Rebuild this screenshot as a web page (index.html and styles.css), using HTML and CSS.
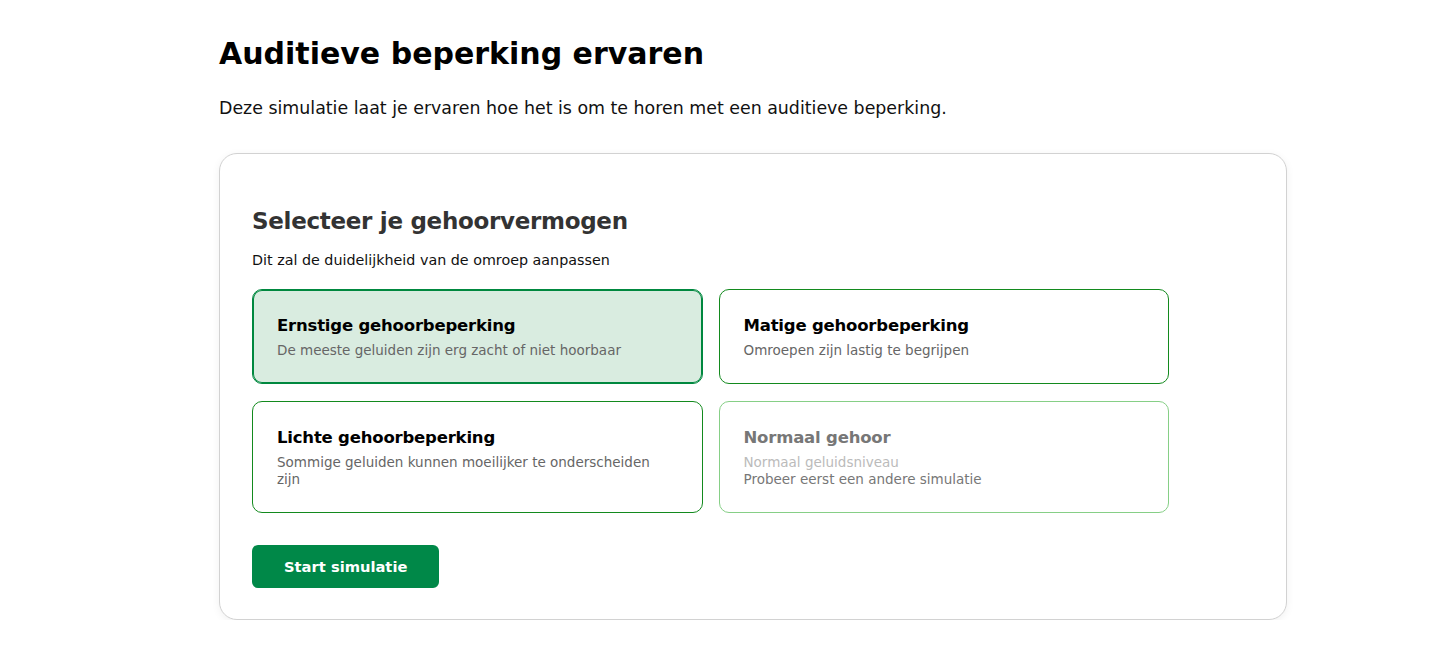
FILE: index.html
```html
<!DOCTYPE html>
<html lang="nl">
<head>
<meta charset="utf-8">
<title>Auditieve beperking ervaren</title>
<link rel="stylesheet" href="styles.css">
</head>
<body>
<main class="page">
  <h1 class="page-title">Auditieve beperking ervaren</h1>
  <p class="page-intro">Deze simulatie laat je ervaren hoe het is om te horen met een auditieve beperking.</p>
  <section class="card">
    <h2 class="card-title">Selecteer je gehoorvermogen</h2>
    <p class="card-sub">Dit zal de duidelijkheid van de omroep aanpassen</p>
    <div class="options">
      <button class="option option--selected" type="button">
        <span class="option-title">Ernstige gehoorbeperking</span>
        <span class="option-desc">De meeste geluiden zijn erg zacht of niet hoorbaar</span>
      </button>
      <button class="option" type="button">
        <span class="option-title">Matige gehoorbeperking</span>
        <span class="option-desc">Omroepen zijn lastig te begrijpen</span>
      </button>
      <button class="option" type="button">
        <span class="option-title">Lichte gehoorbeperking</span>
        <span class="option-desc">Sommige geluiden kunnen moeilijker te onderscheiden zijn</span>
      </button>
      <button class="option option--disabled" type="button" disabled>
        <span class="option-title">Normaal gehoor</span>
        <span class="option-desc">Normaal geluidsniveau</span>
        <span class="option-note">Probeer eerst een andere simulatie</span>
      </button>
    </div>
    <button class="start" type="button">Start simulatie</button>
  </section>
</main>
</body>
</html>
```

FILE: styles.css
```css
* { box-sizing: border-box; }

body {
  margin: 0;
  background: #fff;
  font-family: "DejaVu Sans", "Noto Sans", sans-serif;
  color: #000;
}

.page {
  width: 1068px;
  margin-left: 219px;
  padding-top: 34px;
}

.page-title {
  margin: 0;
  font-size: 30px;
  line-height: 40px;
  font-weight: 700;
  color: #000;
}

.page-intro {
  margin: 20px 0 0;
  font-size: 17.4px;
  line-height: 28px;
  color: #111;
}

.card {
  margin-top: 31px;
  border: 1px solid #d2d2d2;
  border-radius: 18px;
  background: #fff;
  box-shadow: 0 2px 8px rgba(0, 0, 0, 0.06);
  padding: 51px 32px 31px;
}

.card-title {
  margin: 0;
  font-size: 23px;
  letter-spacing: -0.3px;
  line-height: 32px;
  font-weight: 700;
  color: #333;
}

.card-sub {
  margin: 13px 0 0;
  font-size: 14.3px;
  line-height: 20px;
  color: #111;
}

.options {
  margin-top: 19px;
  width: 917px;
  display: grid;
  grid-template-columns: 1fr 1fr;
  gap: 17px 16px;
}

.option {
  display: flex;
  flex-direction: column;
  align-items: flex-start;
  text-align: left;
  font-family: inherit;
  background: #fff;
  border: 1px solid #138a1e;
  border-radius: 10px;
  padding: 24px 24px 24px;
  cursor: pointer;
}

.option--selected {
  background: #d9ece0;
  border-color: #00883f;
  box-shadow: inset 0 0 0 1px #00883f;
}

.option--disabled {
  border-color: #86cf86;
  cursor: default;
}

.option-title {
  font-size: 16.5px;
  letter-spacing: -0.2px;
  line-height: 24px;
  font-weight: 600;
  color: #000;
}

.option-desc,
.option-note {
  margin-top: 4px;
  max-width: 385px;
  font-size: 13.5px;
  line-height: 17px;
  color: #666;
}

.option-note { margin-top: 0; color: #777; }

.option--disabled .option-title { color: #777; }
.option--disabled .option-desc { color: #bbb; }

.start {
  display: block;
  margin-top: 32px;
  height: 43px;
  padding: 0 32px;
  border: 0;
  border-radius: 6px;
  background: #008848;
  color: #fff;
  font-family: inherit;
  font-size: 14.7px;
  font-weight: 700;
  cursor: pointer;
}
```
